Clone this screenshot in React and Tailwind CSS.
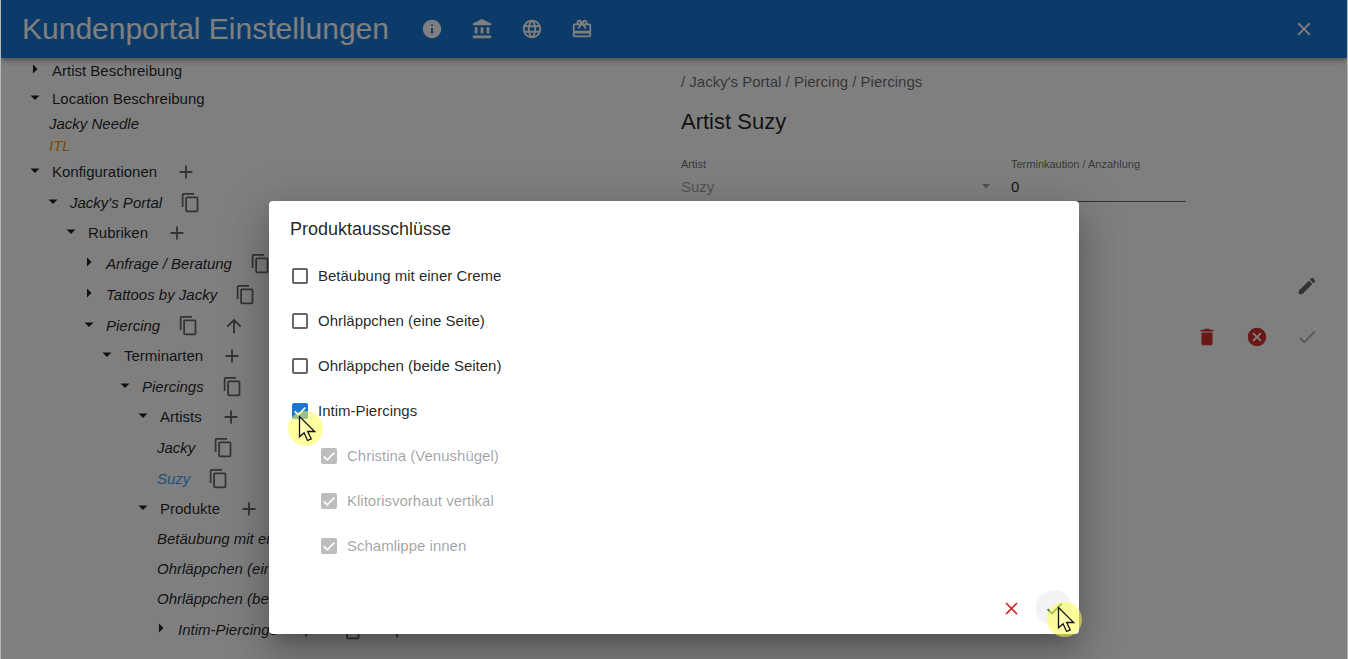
import { useState } from 'react';
import {
  MdAccountBalance,
  MdAdd,
  MdArrowUpward,
  MdCancel,
  MdCardGiftcard,
  MdCheck,
  MdClose,
  MdContentCopy,
  MdDelete,
  MdEdit,
  MdInfo,
  MdLanguage,
} from 'react-icons/md';

const tree = [
  { label: 'Artist Beschreibung', height: 'h-7', children: [], open: false },
  {
    label: 'Location Beschreibung',
    height: 'h-7',
    open: true,
    children: [
      { label: 'Jacky Needle', height: 'h-[22px]', italic: true },
      { label: 'ITL', height: 'h-[22px]', italic: true, color: 'text-[#ff9800]' },
    ],
  },
  {
    label: 'Konfigurationen',
    height: 'h-[30px]',
    open: true,
    actions: ['add'],
    children: [
      {
        label: "Jacky's Portal",
        italic: true,
        open: true,
        actions: ['copy'],
        children: [
          {
            label: 'Rubriken',
            height: 'h-[30px]',
            open: true,
            actions: ['add'],
            children: [
              { label: 'Anfrage / Beratung', italic: true, children: [], actions: ['copy'] },
              { label: 'Tattoos by Jacky', italic: true, children: [], actions: ['copy'] },
              {
                label: 'Piercing',
                italic: true,
                open: true,
                actions: ['copy', 'up'],
                children: [
                  {
                    label: 'Terminarten',
                    height: 'h-[30px]',
                    open: true,
                    actions: ['add'],
                    children: [
                      {
                        label: 'Piercings',
                        italic: true,
                        open: true,
                        actions: ['copy'],
                        children: [
                          {
                            label: 'Artists',
                            height: 'h-[30px]',
                            open: true,
                            actions: ['add'],
                            children: [
                              { label: 'Jacky', italic: true, actions: ['copy'] },
                              { label: 'Suzy', italic: true, color: 'text-[#42a5f5]', actions: ['copy'] },
                            ],
                          },
                          {
                            label: 'Produkte',
                            height: 'h-[30px]',
                            open: true,
                            actions: ['add'],
                            children: [
                              { label: 'Betäubung mit einer Creme', height: 'h-[30px]', italic: true },
                              { label: 'Ohrläppchen (eine Seite)', height: 'h-[30px]', italic: true },
                              { label: 'Ohrläppchen (beide Seiten)', height: 'h-[30px]', italic: true },
                              {
                                label: 'Intim-Piercings',
                                italic: true,
                                children: [],
                                actions: ['add', 'copy', 'up'],
                              },
                            ],
                          },
                        ],
                      },
                    ],
                  },
                ],
              },
            ],
          },
        ],
      },
    ],
  },
];

const products = [
  { id: 'creme', label: 'Betäubung mit einer Creme' },
  { id: 'ohr-eine', label: 'Ohrläppchen (eine Seite)' },
  { id: 'ohr-beide', label: 'Ohrläppchen (beide Seiten)' },
  { id: 'intim', label: 'Intim-Piercings' },
  { id: 'christina', label: 'Christina (Venushügel)', parent: 'intim' },
  { id: 'klitoris', label: 'Klitorisvorhaut vertikal', parent: 'intim' },
  { id: 'scham', label: 'Schamlippe innen', parent: 'intim' },
];

const actionIcons = {
  add: { icon: MdAdd, title: 'Hinzufügen' },
  copy: { icon: MdContentCopy, title: 'Kopieren' },
  up: { icon: MdArrowUpward, title: 'Nach oben' },
};

function Caret({ open }) {
  return (
    <svg viewBox="0 0 14 14" className="w-3.5 h-3.5 block" fill="currentColor">
      {open ? <path d="M2.5 3.5h9L7 8z" /> : <path d="M5 .5v9L9.5 5z" />}
    </svg>
  );
}

function TreeNode({ node }) {
  const [open, setOpen] = useState(Boolean(node.open));
  const isBranch = Boolean(node.children);

  return (
    <li>
      <div className={`flex items-center ${node.height || 'h-[31px]'} ${isBranch ? '' : 'pl-[3px]'}`}>
        {isBranch && (
          <button type="button" aria-label={node.label} onClick={() => setOpen(!open)} className="mr-2.5">
            <Caret open={open} />
          </button>
        )}
        <span
          className={`whitespace-nowrap text-[15px] leading-5 ${node.italic ? 'italic' : ''} ${node.color || ''}`}
        >
          {node.label}
        </span>
        {node.actions && (
          <div className="flex items-center gap-6 ml-[18px] text-black/60">
            {node.actions.map((name) => {
              const { icon: Icon, title } = actionIcons[name];
              return (
                <button key={name} type="button" aria-label={`${node.label}: ${title}`}>
                  <Icon className={name === 'copy' ? 'w-[21px] h-[21px]' : 'w-[22px] h-[22px]'} />
                </button>
              );
            })}
          </div>
        )}
      </div>
      {open && node.children.length > 0 && (
        <ul className="pl-[18px]">
          {node.children.map((child) => (
            <TreeNode key={child.label} node={child} />
          ))}
        </ul>
      )}
    </li>
  );
}

function Pointer() {
  return (
    <svg viewBox="0 0 35 35" className="w-[35px] h-[35px] block">
      <circle cx="17.5" cy="17.5" r="17.5" fill="#ffff50" fillOpacity="0.55" />
      <path
        d="M11.5 5.5v20.3l4.6-4 3.5 7.7 3.6-1.6-3.5-7.4h7z"
        fill="#ffffb4"
        stroke="#111"
        strokeWidth="1.3"
      />
    </svg>
  );
}

function ProductCheckbox({ product, checked, onToggle }) {
  const disabled = Boolean(product.parent);
  return (
    <div className={`flex items-center h-[45px] ${disabled ? 'pl-[29px]' : ''}`}>
      <div className="relative w-4 h-4">
        <input
          id={product.id}
          type="checkbox"
          checked={checked}
          disabled={disabled}
          onChange={onToggle}
          className="appearance-none block w-4 h-4 rounded-xs border-2 border-[#666] checked:border-[#1976d2] checked:bg-[#1976d2] disabled:border-[#bdbdbd] disabled:bg-[#bdbdbd]"
        />
        {checked && (
          <svg viewBox="0 0 16 16" className="absolute inset-0 w-4 h-4 pointer-events-none">
            <path d="M2.8 8.3l3.5 3.5 7-7.2" fill="none" stroke="#fff" strokeWidth="1.8" />
          </svg>
        )}
        {product.id === 'intim' && (
          <div className="absolute -left-1 top-2 z-10 pointer-events-none">
            <Pointer />
          </div>
        )}
      </div>
      <label
        htmlFor={product.id}
        className={`ml-2.5 text-[15px] leading-5 ${disabled ? 'text-black/38' : 'text-black/87'}`}
      >
        {product.label}
      </label>
    </div>
  );
}

function ExclusionDialog() {
  const [selected, setSelected] = useState({ intim: true });

  const toggle = (id) => setSelected({ ...selected, [id]: !selected[id] });

  return (
    <div className="absolute inset-0 bg-black/50 flex justify-center items-start pt-[201px]">
      <div
        role="dialog"
        aria-labelledby="dialog-title"
        className="w-full max-w-[810px] bg-white rounded shadow-[0_11px_15px_-7px_rgba(0,0,0,0.2),0_24px_38px_3px_rgba(0,0,0,0.14),0_9px_46px_8px_rgba(0,0,0,0.12)]"
      >
        <h2 id="dialog-title" className="px-[21px] pt-[18px] text-lg leading-5 text-black/87">
          Produktausschlüsse
        </h2>
        <div className="mt-3.5 px-[23px]">
          {products.map((product) => (
            <ProductCheckbox
              key={product.id}
              product={product}
              checked={Boolean(selected[product.parent || product.id])}
              onToggle={() => toggle(product.id)}
            />
          ))}
        </div>
        <div className="mt-[22px] flex justify-end gap-[7px] pr-[7px] pb-2">
          <button
            type="button"
            aria-label="Abbrechen"
            className="w-9 h-9 rounded-full flex items-center justify-center text-[#d32f2f]"
          >
            <MdClose className="w-[21px] h-[21px]" />
          </button>
          <button
            type="button"
            aria-label="Übernehmen"
            className="relative w-9 h-9 rounded-full flex items-center justify-center bg-[#f3f3f3] text-[#2e7d32]"
          >
            <MdCheck className="w-[21px] h-[21px]" />
            <span className="absolute left-[11px] top-3 pointer-events-none">
              <Pointer />
            </span>
          </button>
        </div>
      </div>
    </div>
  );
}

function Header() {
  return (
    <header className="relative flex items-center h-[58px] pl-[21px] pr-8 bg-[#1976d2] text-white shadow-[0_2px_4px_-1px_rgba(0,0,0,0.2),0_4px_5px_0_rgba(0,0,0,0.14),0_1px_10px_0_rgba(0,0,0,0.12)]">
      <h1 className="text-[30px] leading-9 whitespace-nowrap">Kundenportal Einstellungen</h1>
      <nav className="flex gap-7 ml-8">
        <button type="button" aria-label="Info">
          <MdInfo className="w-[22px] h-[22px]" />
        </button>
        <button type="button" aria-label="Bank">
          <MdAccountBalance className="w-[22px] h-[22px]" />
        </button>
        <button type="button" aria-label="Sprache">
          <MdLanguage className="w-[22px] h-[22px]" />
        </button>
        <button type="button" aria-label="Gutscheine">
          <MdCardGiftcard className="w-[22px] h-[22px]" />
        </button>
      </nav>
      <button type="button" aria-label="Schließen" className="ml-auto">
        <MdClose className="w-[22px] h-[22px]" />
      </button>
    </header>
  );
}

function ArtistDetails() {
  const [deposit, setDeposit] = useState('0');

  return (
    <section className="pl-[7px] pr-[29px] pt-3.5">
      <p className="text-[15px] leading-5 text-black/60">/ Jacky's Portal / Piercing / Piercings</p>
      <h2 className="mt-4 text-[22px] leading-7">Artist Suzy</h2>

      <div className="mt-5 mr-[132px] flex gap-5">
        <div className="flex-1">
          <label htmlFor="artist" className="block text-[11px] leading-4 text-black/60">
            Artist
          </label>
          <div className="relative">
            <select
              id="artist"
              disabled
              className="appearance-none block w-full h-[30px] text-[15px] text-black/38 opacity-100"
            >
              <option>Suzy</option>
            </select>
            <svg viewBox="0 0 10 5" className="absolute right-0 top-3 w-2.5 h-[5px]" fill="#000" fillOpacity="0.35">
              <path d="M1 0h8L5 4.5z" />
            </svg>
          </div>
        </div>
        <div className="w-[175px]">
          <label htmlFor="deposit" className="block text-[11px] leading-4 text-black/60">
            Terminkaution / Anzahlung
          </label>
          <input
            id="deposit"
            type="text"
            value={deposit}
            onChange={(e) => setDeposit(e.target.value)}
            className="block w-full h-[30px] text-[15px] border-b border-black/60 outline-none"
          />
        </div>
      </div>

      <div className="mt-[73px] flex justify-end text-black/60">
        <button type="button" aria-label="Bearbeiten">
          <MdEdit className="w-[22px] h-[22px]" />
        </button>
      </div>
      <div className="mt-[29px] flex justify-end gap-7">
        <button type="button" aria-label="Löschen" className="text-[#d32f2f]">
          <MdDelete className="w-[22px] h-[22px]" />
        </button>
        <button type="button" aria-label="Verwerfen" className="text-[#d32f2f]">
          <MdCancel className="w-[22px] h-[22px]" />
        </button>
        <button type="button" aria-label="Speichern" disabled className="text-black/30">
          <MdCheck className="w-[22px] h-[22px]" />
        </button>
      </div>
    </section>
  );
}

export default function App() {
  return (
    <div className="relative h-screen overflow-hidden border-x border-[#b8b8b8] bg-white text-black/87 font-['Liberation_Sans',Arial,sans-serif]">
      <Header />
      <main className="grid grid-cols-2">
        <ul className="-mt-px pl-[27px]">
          {tree.map((node) => (
            <TreeNode key={node.label} node={node} />
          ))}
        </ul>
        <ArtistDetails />
      </main>
      <ExclusionDialog />
    </div>
  );
}
